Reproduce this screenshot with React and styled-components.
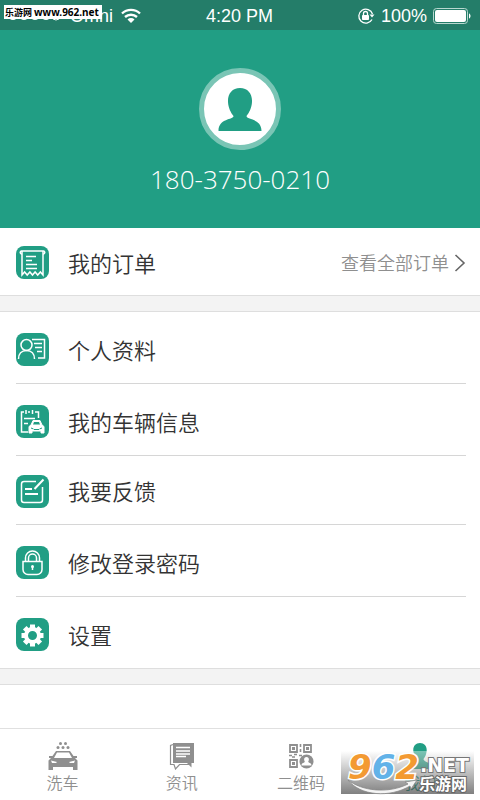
import React from "react";
import styled, { createGlobalStyle } from "styled-components";

const GREEN = "#219e84";
const GREY = "#8f8f8f";

const OrderIcon = () => (
    <IconSvg viewBox="0 0 33 33">
        <path d="M6 8a1.500 1.500 0 1 1-.5-3h22a1.500 1.500 0 1 1-.5 3" />
        <path d="M6 5v24l2.600-3 2.600 3 2.700-3 2.600 3 2.600-3 2.600 3 2.700-3 2.600 3V5" />
        <path d="M10 10.500h10M10 14.500h6M10 18.500h11M10 22.500h11" />
    </IconSvg>
);

const ProfileIcon = () => (
    <IconSvg viewBox="0 0 33 33">
        <circle cx="10.500" cy="12" r="5.500" />
        <path d="M2.500 26c0-5 3-8.500 8-8.500s8 3.500 8 8.500" />
        <path d="M16 6.500h12.500V25H22M18 10.500h8M19 14.500h7M21 18.500h5" />
    </IconSvg>
);

const VehicleIcon = () => (
    <IconSvg viewBox="0 0 33 33">
        <path d="M8 7H5.500v20H12M12 7h2M19 7h3.500v6M10 5v4M16.500 5v4M8 13.500h11M8 18.500h4" />
        <path
            d="M15 20l2-4.500h7l2 4.500 2 1.500V28h-3v-2h-9v2h-3v-6.500z"
            fill="#fff"
            strokeWidth="1"
        />
        <path d="M17 19.500l1-2.500h5l1 2.500z" fill={GREEN} stroke="none" />
        <path d="M15 23l2.500 1M26 23l-2.500 1M18 24.500h5" stroke={GREEN} strokeWidth="1" />
    </IconSvg>
);

const FeedbackIcon = () => (
    <IconSvg viewBox="0 0 33 33">
        <path d="M20 6.500H8A2.500 2.500 0 0 0 5.500 9v16A2.500 2.500 0 0 0 8 27.500h16a2.500 2.500 0 0 0 2.500-2.500V12" />
        <path d="M27.500 4.500L18.500 14M9 14h7M9 19h13" strokeWidth="2" />
    </IconSvg>
);

const PasswordIcon = () => (
    <IconSvg viewBox="0 0 33 33">
        <path d="M7 15.500h19v8a5 5 0 0 1-5 5h-9a5 5 0 0 1-5-5z" />
        <path d="M9.500 15v-3a7 7 0 0 1 14 0v3M12.500 15v-3a4 4 0 0 1 8 0v3" />
        <circle cx="16.500" cy="20.500" r="1.500" fill="#fff" stroke="none" />
        <path d="M16.500 21v3" />
    </IconSvg>
);

const SettingsIcon = () => (
    <IconSvg viewBox="0 0 33 33">
        <circle cx="16.500" cy="17.500" r="6.500" strokeWidth="4" />
        {[0, 45, 90, 135, 180, 225, 270, 315].map((angle) => (
            <path
                key={angle}
                d="M16.500 10V6.500"
                strokeWidth="5"
                transform={`rotate(${angle} 16.500 17.500)`}
            />
        ))}
    </IconSvg>
);

const WashTabIcon = () => (
    <svg width="30" height="28" viewBox="0 0 30 28" fill="currentColor">
        <circle cx="12.500" cy="1.500" r="1.500" />
        <circle cx="17.500" cy="1.500" r="1.500" />
        <circle cx="10" cy="5.500" r="1.500" />
        <circle cx="15" cy="5.500" r="1.500" />
        <circle cx="20" cy="5.500" r="1.500" />
        <path
            fillRule="evenodd"
            d="M8 9h14l3.500 5H29v2h-2l2.500 2.500V28H25v-3H5v3H.5v-9.500L3 16H1v-2h3.500zM9 10.500L6 16h18l-3-5.500zM3 18.500l1 2.500h4l1-1zM27 18.500L26 21h-4l-1-1z"
        />
    </svg>
);

const NewsTabIcon = () => (
    <svg width="26" height="28" viewBox="0 0 26 28" fill="currentColor">
        <path
            d="M4 2.500L1.500 3.500V22.500H5L6.500 27l4-4.500H20"
            fill="none"
            stroke="currentColor"
            strokeWidth="1.200"
        />
        <path d="M4 1h21v20h-2.500v4.500L18 21H4z" />
        <path d="M7 5.500h14M7 9h14M7 12h14M7 14.500h10" stroke="#fff" strokeWidth="1.300" />
    </svg>
);

const CodeTabIcon = () => (
    <svg width="26" height="26" viewBox="0 0 26 26" fill="none" stroke="currentColor">
        <path
            d="M2 2h7v7H2zM16 2h7v7h-7zM2 17h7v7H2z"
            strokeWidth="1.800"
        />
        <path
            d="M4 4h3v3H4zM18 4h3v3h-3zM4 19h3v3H4z"
            fill="currentColor"
            stroke="none"
        />
        <path
            d="M12.500 1v3M12.500 6v3M1 12.500h3M6 11.500h3M11 12.500h3M4 14h3"
            strokeWidth="1.600"
        />
        <circle cx="18.500" cy="18.500" r="7" fill="currentColor" stroke="none" />
        <path
            d="M18.500 14c2.500 0 3 2.500 1.700 4.700 0 1 3.300 1 3.300 3.800h-10c0-2.800 3.300-2.800 3.300-3.800C15.500 16.500 16 14 18.500 14z"
            fill="#fff"
            stroke="none"
        />
    </svg>
);

const MineTabIcon = () => (
    <svg width="28" height="28" viewBox="0 0 28 28" fill="currentColor">
        <path d="M14 1c5 0 7.500 4 6.500 9-.4 3-1.500 5-3 7 .5 4 9.500 3 9.500 10H1c0-7 9-6 9.500-10-1.500-2-2.600-4-3-7C6.500 5 9 1 14 1z" />
    </svg>
);

const profileRows = [
    { label: "个人资料", icon: <ProfileIcon /> },
    { label: "我的车辆信息", icon: <VehicleIcon /> },
    { label: "我要反馈", icon: <FeedbackIcon />, compact: true },
    { label: "修改登录密码", icon: <PasswordIcon /> },
    { label: "设置", icon: <SettingsIcon /> },
];

const tabs = [
    { label: "洗车", icon: <WashTabIcon /> },
    { label: "资讯", icon: <NewsTabIcon /> },
    { label: "二维码", icon: <CodeTabIcon /> },
    { label: "我的", icon: <MineTabIcon />, active: true },
];

export default function App() {
    return (
        <>
            <GlobalStyle />
            <Page>
                <StatusBar>
                    <StatusLeft>
                        <svg width="58" height="10" viewBox="0 0 58 10" fill="#fff">
                            <circle cx="5" cy="5" r="4" />
                            <circle cx="16" cy="5" r="4" />
                            <circle cx="27" cy="5" r="4" />
                            <circle cx="38" cy="5" r="4" />
                            <circle cx="48" cy="5" r="4" fill="none" stroke="#fff" />
                        </svg>
                        Omni
                        <svg width="20" height="16" viewBox="0 0 20 16">
                            <path
                                d="M1 5.500a13 13 0 0 1 18 0M4 9a9 9 0 0 1 12 0"
                                fill="none"
                                stroke="#fff"
                                strokeWidth="2.400"
                            />
                            <path d="M6.500 11.500a5 5 0 0 1 7 0L10 15z" fill="#fff" />
                        </svg>
                    </StatusLeft>
                    <span>4:20 PM</span>
                    <StatusRight>
                        <svg width="18" height="18" viewBox="0 0 18 18" fill="none" stroke="#fff">
                            <path d="M15 12.500a7 7 0 1 1 .5-5.500" strokeWidth="1.300" />
                            <path d="M12.500 7.500h5L15 10.500z" fill="#fff" stroke="none" />
                            <path d="M5.500 8.500h6v4h-6z" fill="#fff" />
                            <path d="M6.500 8V6.500a2 2 0 0 1 4 0V8" strokeWidth="1.300" />
                        </svg>
                        100%
                        <svg width="38" height="16" viewBox="0 0 38 16" fill="#fff">
                            <rect x=".5" y=".5" width="34" height="15" rx="3" fill="none" stroke="#b9d8d0" />
                            <rect x="2" y="2" width="31" height="12" rx="2" />
                            <path d="M36 5.500c2 .5 2 4.500 0 5z" />
                        </svg>
                    </StatusRight>
                </StatusBar>
                <SiteTag>
                    乐游网 <span>www.962.net</span>
                </SiteTag>

                <Hero>
                    <Avatar>
                        <svg width="44" height="44" viewBox="0 0 44 44" fill={GREEN}>
                            <path d="M22 1c8 0 12.500 6 12 14-.3 6-3 11-5.500 14 0 4 15 2 15 15H.5c0-13 15-11 15-15C13 26 10.300 21 10 15 9.500 7 14 1 22 1z" />
                        </svg>
                    </Avatar>
                    <Phone>180-3750-0210</Phone>
                </Hero>

                <Row>
                    <RowLink href="#orders">
                        <IconTile>
                            <OrderIcon />
                        </IconTile>
                        <RowLabel>我的订单</RowLabel>
                    </RowLink>
                    <AllOrders href="#all-orders">
                        <RowLabel>查看全部订单</RowLabel>
                        <svg width="12" height="18" viewBox="0 0 12 18" fill="none">
                            <path d="M1.500 1l8.500 8-8.500 8" stroke="#666" strokeWidth="1.600" />
                        </svg>
                    </AllOrders>
                </Row>
                <Band />
                <Menu>
                    {profileRows.map((row) => (
                        <MenuItem key={row.label} $compact={row.compact}>
                            <RowLink href="#menu">
                                <IconTile>{row.icon}</IconTile>
                                <RowLabel>{row.label}</RowLabel>
                            </RowLink>
                        </MenuItem>
                    ))}
                </Menu>
                <Band />
                <Spacer />

                <TabBar>
                    {tabs.map((tab) => (
                        <Tab key={tab.label} href="#tab" $active={tab.active}>
                            <TabIcon>{tab.icon}</TabIcon>
                            {tab.label}
                        </Tab>
                    ))}
                    <Watermark>
                        <Digits>
                            9<em>6</em>2
                        </Digits>
                        <Swoosh viewBox="0 0 76 18">
                            <path
                                d="M2 1c14 11 40 14 60 4l-3-2 12-2-6 9-1-3C44 19 14 17 2 1z"
                                fill="#f4f4f4"
                                stroke="#888"
                                strokeWidth=".8"
                            />
                        </Swoosh>
                        <DotNet>.NET</DotNet>
                        <SiteName>乐游网</SiteName>
                    </Watermark>
                </TabBar>
            </Page>
        </>
    );
}

const GlobalStyle = createGlobalStyle`
    * {
        box-sizing: border-box;
    }
    body {
        margin: 0;
        background: #fff;
        font-family: "Noto Sans CJK SC", sans-serif;
    }
    a {
        color: inherit;
        text-decoration: none;
    }
    svg {
        display: block;
    }
`;
const Page = styled.div`
    position: relative;
    min-height: 100vh;
    display: flex;
    flex-direction: column;
`;
const StatusBar = styled.header`
    display: grid;
    grid-template-columns: 1fr auto 1fr;
    align-items: center;
    height: 30px;
    padding: 2px 9px 0 8px;
    background: #247d69;
    color: #fff;
    font: 18px "Liberation Sans", sans-serif;
`;
const StatusLeft = styled.div`
    display: flex;
    align-items: center;
    gap: 4px;
    & > svg:last-child {
        margin-left: 4px;
    }
`;
const StatusRight = styled.div`
    display: flex;
    align-items: center;
    justify-content: flex-end;
    gap: 6px;
`;
const SiteTag = styled.div`
    position: absolute;
    top: 5px;
    left: 4px;
    width: 98px;
    height: 14px;
    padding-left: 1px;
    background: #fff;
    color: #000;
    font-size: 9px;
    font-weight: 700;
    line-height: 14px;
    white-space: nowrap;
    span {
        font-family: "Noto Sans", sans-serif;
        font-size: 10px;
    }
`;
const Hero = styled.section`
    display: flex;
    flex-direction: column;
    align-items: center;
    height: 198px;
    padding-top: 38px;
    background: ${GREEN};
`;
const Avatar = styled.div`
    display: flex;
    align-items: center;
    justify-content: center;
    width: 82px;
    height: 82px;
    border: 5px solid #7ac5b5;
    border-radius: 50%;
    background: #fff;
`;
const Phone = styled.div`
    margin-top: 10px;
    color: #fff;
    font-family: "Open Sans", sans-serif;
    font-size: 26px;
    font-weight: 300;
    line-height: 38px;
`;
const Row = styled.section`
    display: flex;
    align-items: center;
    justify-content: space-between;
    height: 67px;
    padding: 2px 14px 0 16px;
`;
const RowLink = styled.a`
    display: flex;
    align-items: center;
    gap: 19px;
    color: #333;
    font-family: "Noto Sans CJK SC DemiLight", "Noto Sans CJK SC", sans-serif;
    font-size: 22px;
    line-height: 32px;
`;
const RowLabel = styled.span`
    padding-bottom: 2px;
`;
const AllOrders = styled.a`
    display: flex;
    align-items: center;
    gap: 5px;
    color: ${GREY};
    font-family: "Noto Sans CJK SC DemiLight", "Noto Sans CJK SC", sans-serif;
    font-size: 18px;
`;
const IconTile = styled.span`
    flex: none;
    width: 33px;
    height: 33px;
    border-radius: 8px;
    background: ${GREEN};
`;
const IconSvg = styled.svg`
    width: 33px;
    height: 33px;
    fill: none;
    stroke: #fff;
    stroke-width: 1.5;
`;
const Band = styled.div`
    height: 17px;
    border-top: 1px solid #dedede;
    border-bottom: 1px solid #dedede;
    background: #f3f3f3;
`;
const Menu = styled.ul`
    margin: 0;
    padding: 0 14px 0 16px;
    list-style: none;
`;
const MenuItem = styled.li`
    display: flex;
    align-items: center;
    height: ${(props) => (props.$compact ? "69px" : "72px")};
    padding-top: ${(props) => (props.$compact ? "2px" : "4px")};
    border-bottom: 1px solid #d6d6d6;
    &:last-child {
        height: 71px;
        border-bottom: 0;
    }
`;
const Spacer = styled.div`
    flex: 1;
`;
const TabBar = styled.nav`
    position: relative;
    display: grid;
    grid-template-columns: repeat(4, 1fr);
    height: 72px;
    padding-left: 3px;
    border-top: 1px solid #e0e0e0;
    background: #fff;
`;
const Tab = styled.a`
    display: flex;
    flex-direction: column;
    align-items: center;
    padding-top: 13px;
    color: ${(props) => (props.$active ? GREEN : GREY)};
    font-family: "Noto Sans CJK SC DemiLight", "Noto Sans CJK SC", sans-serif;
    font-size: 16px;
    line-height: 24px;
`;
const TabIcon = styled.span`
    display: flex;
    align-items: center;
    height: 28px;
`;
const Watermark = styled.div`
    position: absolute;
    right: 6px;
    bottom: 6px;
    width: 133px;
    height: 43px;
    background: linear-gradient(rgba(255, 255, 255, 0.4), rgba(60, 60, 60, 0.65));
    color: #fff;
    font-family: "DejaVu Sans", "Noto Sans CJK SC", sans-serif;
    font-weight: 700;
    pointer-events: none;
`;
const Digits = styled.span`
    position: absolute;
    top: -2px;
    left: 7px;
    color: #f39a32;
    font-size: 34px;
    font-style: italic;
    line-height: 36px;
    paint-order: stroke fill;
    -webkit-text-stroke: 3px #fff;
    em {
        color: #62b2e8;
    }
`;
const Swoosh = styled.svg`
    position: absolute;
    top: 28px;
    left: 5px;
    width: 76px;
    height: 18px;
`;
const DotNet = styled.span`
    position: absolute;
    top: 4px;
    left: 79px;
    font-size: 19px;
    line-height: 20px;
    paint-order: stroke fill;
    -webkit-text-stroke: 2px #777;
`;
const SiteName = styled.span`
    position: absolute;
    top: 22px;
    left: 78px;
    font-family: "Noto Sans CJK SC", sans-serif;
    font-size: 16px;
    line-height: 20px;
    paint-order: stroke fill;
    -webkit-text-stroke: 2px #666;
`;
